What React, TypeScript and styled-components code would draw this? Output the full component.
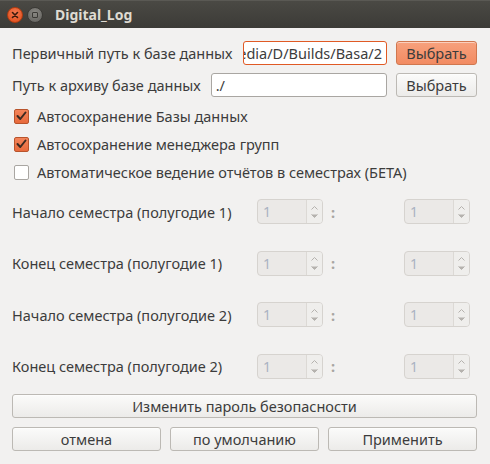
import React from "react";
import styled, { createGlobalStyle } from "styled-components";

const Global = createGlobalStyle`
  html, body { margin: 0; padding: 0; background: #f2f1f0; }
  body { font-family: "Noto Sans", "DejaVu Sans", sans-serif; }
  * { box-sizing: border-box; }
`;

const Window = styled.div`
  width: 490px;
  height: 464px;
  background: #f2f1f0;
  display: flex;
  flex-direction: column;
  overflow: hidden;
`;

const TitleBar = styled.div`
  height: 28px;
  flex: none;
  background: linear-gradient(#4a4944, #3c3b37);
  border-top: 1px solid #5a5954;
  display: flex;
  align-items: center;
  padding-left: 7px;
  gap: 4px;
`;

const CircleBtn = styled.div<{ $kind: "close" | "min" }>`
  width: 16px;
  height: 16px;
  border-radius: 50%;
  display: flex;
  align-items: center;
  justify-content: center;
  background: ${(p) =>
    p.$kind === "close"
      ? "radial-gradient(circle at 50% 35%, #f37a52, #df4a16)"
      : "radial-gradient(circle at 50% 35%, #8a8984, #5f5e5a)"};
  border: 1px solid ${(p) => (p.$kind === "close" ? "#b23c10" : "#3a3935")};
`;

const MinSquare = styled.div`
  width: 6px;
  height: 6px;
  border: 1.5px solid #3b3a36;
  border-radius: 1px;
`;

const Title = styled.div`
  margin-left: 8px;
  color: #dfdbd2;
  font-weight: bold;
  font-size: 14px;
  font-family: "Noto Sans", sans-serif;
`;

const Body = styled.div`
  padding: 13px 13px 0 12px;
  display: flex;
  flex-direction: column;
  color: #3c3c3c;
  font-size: 14.5px;
`;

const PathRow = styled.div<{ $gapAfter: number }>`
  display: flex;
  align-items: center;
  height: 24px;
  margin-bottom: ${(p) => p.$gapAfter}px;
`;

const Label = styled.span`
  white-space: nowrap;
  color: #3c3c3c;
`;

const Input = styled.div<{ $focused?: boolean }>`
  flex: 1;
  height: 24px;
  margin-left: 10px;
  background: #fff;
  border: 1px solid ${(p) => (p.$focused ? "#e05a25" : "#a9a6a2")};
  border-radius: 3px;
  overflow: hidden;
  display: flex;
  align-items: center;
  justify-content: ${(p) => (p.$focused ? "flex-end" : "flex-start")};
  padding: 0 4px;
  white-space: nowrap;
  font-size: 14.5px;
  color: #3c3c3c;
`;

const Button = styled.button<{ $primary?: boolean }>`
  height: 24px;
  border-radius: 3px;
  font-family: "Noto Sans", "DejaVu Sans", sans-serif;
  font-size: 14.5px;
  color: #3c3c3c;
  padding: 0;
  border: 1px solid ${(p) => (p.$primary ? "#d0774f" : "#bcb9b4")};
  background: ${(p) =>
    p.$primary
      ? "linear-gradient(#f7a17d, #f28b62)"
      : "linear-gradient(#fbfbfa, #ecebe9)"};
  box-shadow: inset 0 1px 0 rgba(255, 255, 255, 0.5);
`;

const SelectBtn = styled(Button)`
  margin-left: 9px;
  width: 81px;
  flex: none;
`;

const CheckRow = styled.label`
  display: flex;
  align-items: center;
  height: 28px;
  padding-left: 2px;
  gap: 8px;
  color: #3c3c3c;
`;

const CheckBox = styled.span<{ $checked?: boolean }>`
  width: 15px;
  height: 15px;
  border-radius: 2px;
  display: flex;
  align-items: center;
  justify-content: center;
  border: 1px solid ${(p) => (p.$checked ? "#b8542c" : "#a9a6a2")};
  background: ${(p) =>
    p.$checked ? "linear-gradient(#f3845a, #e86a3c)" : "#fff"};
`;

const SpinRow = styled.div`
  display: grid;
  grid-template-columns: 245px 66px 81px 66px;
  align-items: center;
  height: 51.5px;
`;

const Colon = styled.span`
  padding-left: 8px;
  color: #a8a5a2;
  font-weight: bold;
`;

const Spin = styled.div`
  height: 25px;
  display: flex;
  border: 1px solid #d6d3cf;
  border-radius: 4px;
  background: #ebe9e7;
  overflow: hidden;
`;

const SpinValue = styled.div`
  flex: 1;
  display: flex;
  align-items: center;
  padding-left: 5px;
  color: #a9b2c2;
  font-size: 14px;
`;

const SpinArrows = styled.div`
  width: 16px;
  border-left: 1px solid #dcd9d5;
  display: flex;
  flex-direction: column;
  align-items: center;
  justify-content: space-around;
  padding: 3px 0;
  background: #efeeec;
`;

const Bottom = styled.div`
  display: flex;
  flex-direction: column;
  gap: 9px;
  margin-top: 2px;
`;

const ButtonRow = styled.div`
  display: grid;
  grid-template-columns: 1fr 1fr 1fr;
  gap: 9px;
`;

const Check = () => (
  <svg width="11" height="10" viewBox="0 0 11 10">
    <path d="M1.5 5 L4.3 8 L9.5 1.5" stroke="#3b2a22" strokeWidth="2" fill="none" strokeLinecap="round" strokeLinejoin="round" />
  </svg>
);

const Arrow = ({ up }: { up?: boolean }) => (
  <svg width="7" height="4" viewBox="0 0 7 4">
    <path d={up ? "M0.5 3.5 L3.5 0.5 L6.5 3.5" : "M0.5 0.5 L3.5 3.5 L6.5 0.5"} fill={up ? "none" : "#b5b2ae"} stroke="#b5b2ae" strokeWidth="1" />
  </svg>
);

const SpinBox = () => (
  <Spin>
    <SpinValue>1</SpinValue>
    <SpinArrows>
      <Arrow up />
      <Arrow />
    </SpinArrows>
  </Spin>
);

const semesters = [
  "Начало семестра (полугодие 1)",
  "Конец семестра (полугодие 1)",
  "Начало семестра (полугодие 2)",
  "Конец семестра (полугодие 2)",
];

export default function App() {
  return (
    <Window>
      <Global />
      <TitleBar>
        <CircleBtn $kind="close">
          <svg width="8" height="8" viewBox="0 0 8 8">
            <path d="M1.5 1.5 L6.5 6.5 M6.5 1.5 L1.5 6.5" stroke="#3a1a0c" strokeWidth="1.6" strokeLinecap="round" />
          </svg>
        </CircleBtn>
        <CircleBtn $kind="min">
          <MinSquare />
        </CircleBtn>
        <Title>Digital_Log</Title>
      </TitleBar>
      <Body>
        <PathRow $gapAfter={8}>
          <Label>Первичный путь к базе данных</Label>
          <Input $focused>edia/D/Builds/Basa/2</Input>
          <SelectBtn $primary>Выбрать</SelectBtn>
        </PathRow>
        <PathRow $gapAfter={5}>
          <Label>Путь к архиву базе данных</Label>
          <Input>./</Input>
          <SelectBtn>Выбрать</SelectBtn>
        </PathRow>
        <CheckRow>
          <CheckBox $checked>
            <Check />
          </CheckBox>
          Автосохранение Базы данных
        </CheckRow>
        <CheckRow>
          <CheckBox $checked>
            <Check />
          </CheckBox>
          Автосохранение менеджера групп
        </CheckRow>
        <CheckRow>
          <CheckBox />
          Автоматическое ведение отчётов в семестрах (БЕТА)
        </CheckRow>
        {semesters.map((s) => (
          <SpinRow key={s}>
            <Label>{s}</Label>
            <SpinBox />
            <Colon>:</Colon>
            <SpinBox />
          </SpinRow>
        ))}
        <Bottom>
          <Button>Изменить пароль безопасности</Button>
          <ButtonRow>
            <Button>отмена</Button>
            <Button>по умолчанию</Button>
            <Button>Применить</Button>
          </ButtonRow>
        </Bottom>
      </Body>
    </Window>
  );
}
